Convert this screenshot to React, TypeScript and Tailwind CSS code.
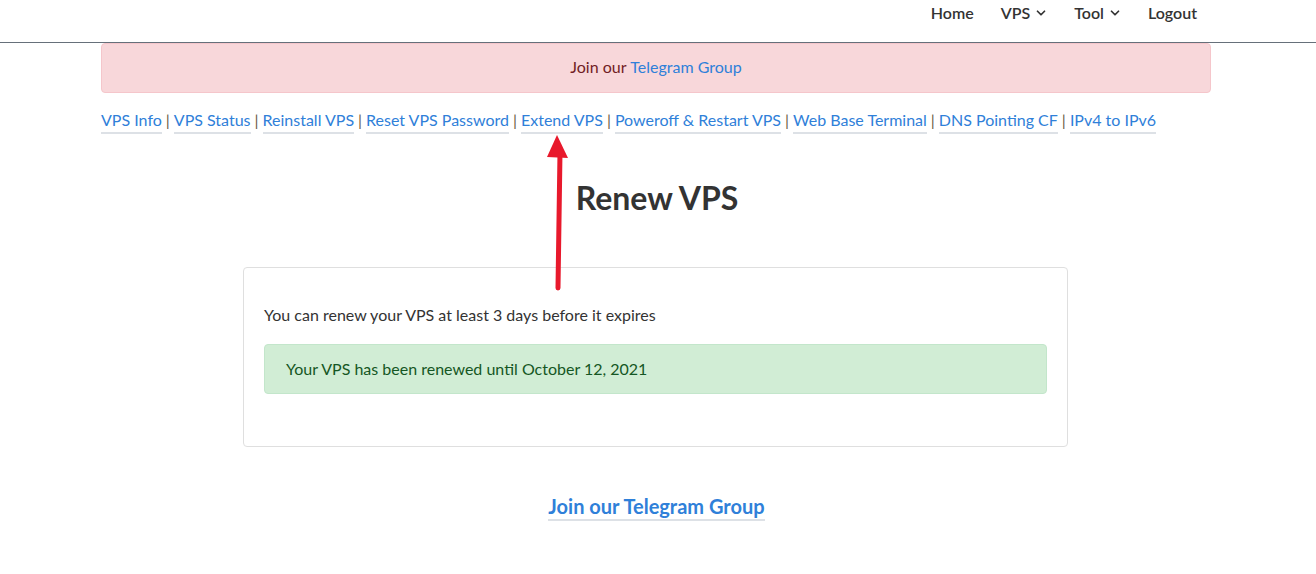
import { ChevronDown } from "lucide-react";

// ─── Data ───────────────────────────────────────────────────────────────────

const MENU_LINKS = [
  "VPS Info",
  "VPS Status",
  "Reinstall VPS",
  "Reset VPS Password",
  "Extend VPS",
  "Poweroff & Restart VPS",
  "Web Base Terminal",
  "DNS Pointing CF",
  "IPv4 to IPv6",
];

// ─── Header ─────────────────────────────────────────────────────────────────

function TopNav() {
  return (
    <header className="h-[43px] border-b border-[#66707a]">
      <nav className="flex justify-end items-start pr-[119px] pt-[1px] gap-[26px] text-[16px] font-semibold text-[#333]">
        <span className="mr-[1px]">Home</span>
        <span className="flex items-center gap-[4px]">
          VPS <ChevronDown className="w-[14px] h-[14px]" strokeWidth={3} />
        </span>
        <span className="flex items-center gap-[4px]">
          Tool <ChevronDown className="w-[14px] h-[14px]" strokeWidth={3} />
        </span>
        <span>Logout</span>
      </nav>
    </header>
  );
}

// ─── Red arrow annotation ───────────────────────────────────────────────────

function Arrow() {
  return (
    <svg
      className="absolute left-[540px] top-[130px] pointer-events-none"
      width="40"
      height="165"
      viewBox="0 0 40 165"
    >
      <path d="M20 22 L18 158" stroke="#e8192c" strokeWidth="5" strokeLinecap="round" />
      <path d="M17 5 L28 28 L7 27 Z" fill="#e8192c" />
    </svg>
  );
}

// ─── Page ───────────────────────────────────────────────────────────────────

export default function App() {
  return (
    <div className="relative w-[1316px] h-[574px] bg-white font-['Lato',sans-serif] text-[#333]">
      <TopNav />

      <div className="ml-[101px] w-[1110px]">
        <div className="h-[50px] pb-[2px] flex items-center justify-center rounded-[4px] border border-[#f5c6cb] bg-[#f8d7da] text-[16px] text-[#721c24]">
          Join our&nbsp;<span className="text-[#2f80d9]">Telegram Group</span>
        </div>

        <div className="mt-[16px] flex items-start text-[16px] leading-[22px]">
          {MENU_LINKS.map((l, i) => (
            <span key={l} className="flex items-start">
              {i > 0 && <span className="px-[4px] text-[#6b5b45]">|</span>}
              <span className="text-[#2f80d9] border-b-2 border-[#dde1e6] pb-[1px]">{l}</span>
            </span>
          ))}
        </div>

        <h1 className="mt-[44px] text-center text-[32px] font-bold leading-[40px] text-[#333] pl-[2px]">
          Renew VPS
        </h1>
      </div>

      <div className="ml-[243px] mt-[49px] w-[825px] h-[180px] rounded-[4px] border border-[#dfdfdf] px-[20px] pt-[36px]">
        <p className="text-[16px] leading-[22px] text-[#333]">
          You can renew your VPS at least 3 days before it expires
        </p>
        <div className="mt-[18px] h-[50px] flex items-center rounded-[4px] border border-[#c3e6cb] bg-[#d1edd5] pl-[21px] text-[16px] text-[#155724]">
          Your VPS has been renewed until October 12, 2021
        </div>
      </div>

      <div className="mt-[46px] flex justify-center">
        <span className="text-[20px] font-bold leading-[26px] text-[#2f80d9] border-b-2 border-[#dde1e6] ml-[-3px]">
          Join our Telegram Group
        </span>
      </div>

      <Arrow />
    </div>
  );
}
